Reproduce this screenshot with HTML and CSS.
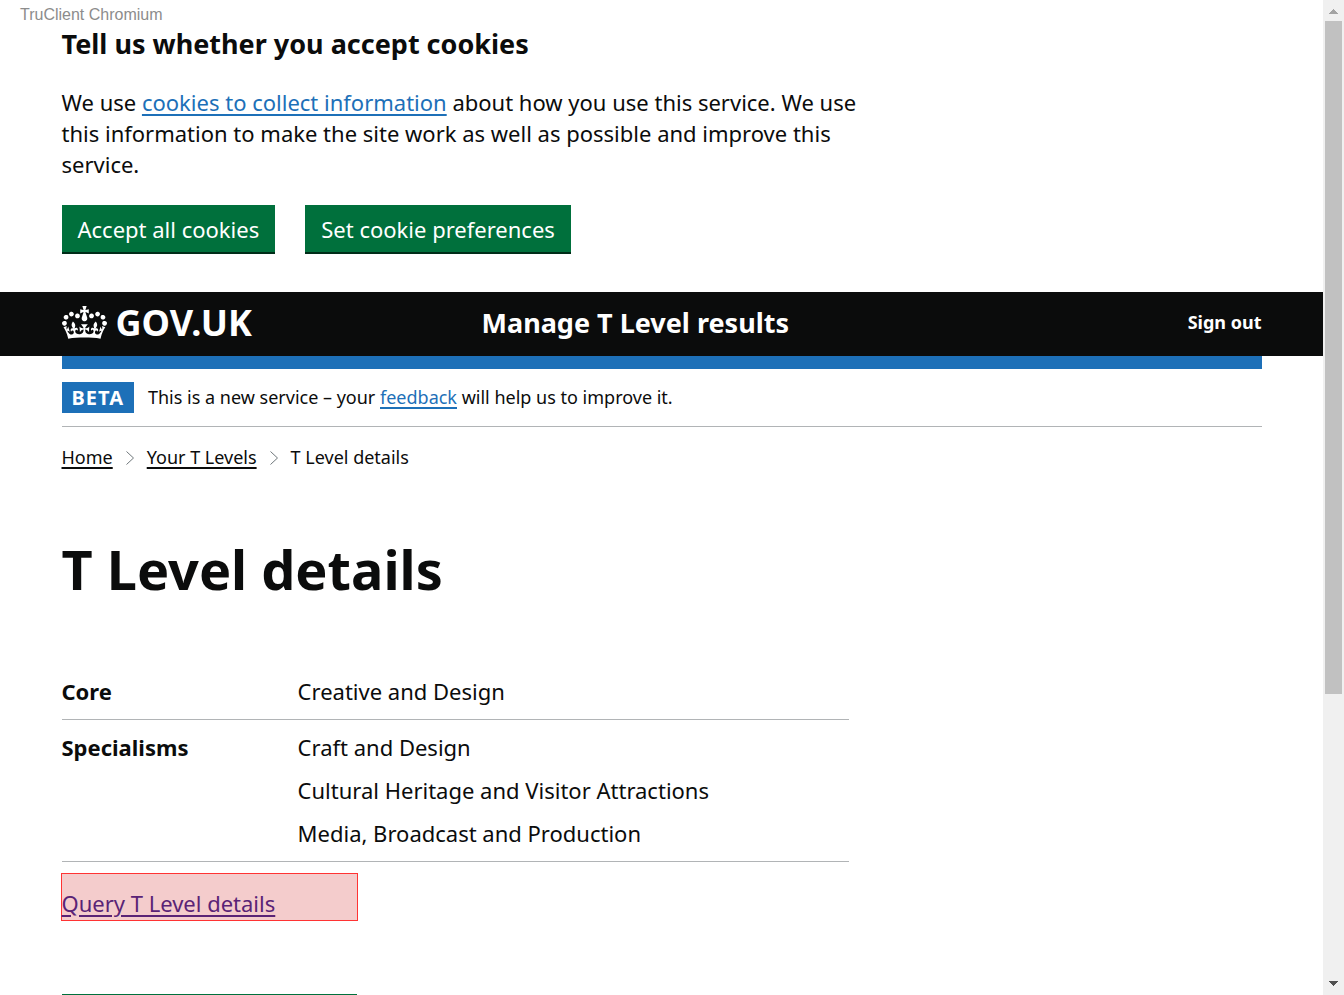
FILE: index.html
```html
<!DOCTYPE html>
<html lang="en">
<head>
<meta charset="utf-8">
<title>T Level details</title>
<link rel="stylesheet" href="styles.css">
</head>
<body>
<div class="page">
  <p class="client-label">TruClient Chromium</p>
  <section class="container cookies" aria-labelledby="cookie-title">
    <h2 class="cookies-title" id="cookie-title">Tell us whether you accept cookies</h2>
    <p class="cookies-text">We use <a class="link" href="#">cookies to collect information</a> about how you use this service. We use this information to make the site work as well as possible and improve this service.</p>
    <div class="cookies-actions">
      <button class="button" type="button">Accept all cookies</button>
      <button class="button" type="button">Set cookie preferences</button>
    </div>
  </section>
  <header class="header">
    <div class="container header-row">
      <a class="logo" href="#">
        <svg class="crown" viewBox="0 0 132 97" aria-hidden="true"><path fill="currentColor" fill-rule="evenodd" d="M25 30.2c3.5 1.5 7.7-.2 9.1-3.7 1.5-3.6-.2-7.8-3.9-9.2-3.6-1.4-7.6.3-9.1 3.9-1.4 3.5.3 7.5 3.9 9zM9 39.5c3.6 1.5 7.8-.2 9.2-3.7 1.5-3.6-.2-7.8-3.9-9.1-3.6-1.5-7.6.2-9.1 3.8-1.4 3.5.3 7.5 3.8 9zM4.4 57.2c3.5 1.5 7.7-.2 9.1-3.8 1.5-3.6-.2-7.7-3.9-9.1-3.5-1.5-7.6.3-9.1 3.8-1.4 3.5.3 7.6 3.9 9.1zm38.3-21.4c3.5 1.5 7.7-.2 9.1-3.8 1.5-3.6-.2-7.7-3.9-9.1-3.6-1.5-7.6.3-9.1 3.8-1.3 3.6.4 7.7 3.9 9.1zm64.4-5.6c-3.6 1.5-7.8-.2-9.1-3.7-1.5-3.6.2-7.8 3.8-9.2 3.6-1.4 7.7.3 9.2 3.9 1.3 3.5-.4 7.5-3.9 9zm15.9 9.3c-3.6 1.5-7.7-.2-9.1-3.7-1.5-3.6.2-7.8 3.7-9.1 3.6-1.5 7.7.2 9.2 3.8 1.5 3.5-.3 7.5-3.8 9zm4.7 17.7c-3.6 1.5-7.8-.2-9.2-3.8-1.5-3.6.2-7.7 3.9-9.1 3.6-1.5 7.7.3 9.2 3.8 1.3 3.5-.4 7.6-3.9 9.1zM89.3 35.8c-3.6 1.5-7.8-.2-9.2-3.8-1.4-3.6.2-7.7 3.9-9.1 3.6-1.5 7.7.3 9.2 3.8 1.4 3.6-.3 7.7-3.9 9.1zM69.7 17.7l8.9 4.7V9.3l-8.9 2.8c-.2-.3-.5-.6-.9-.9L72.4 0H59.6l3.5 11.2c-.3.3-.6.5-.9.9l-8.8-2.8v13.1l8.8-4.7c.3.3.6.7.9.9l-5 15.4v.1c-.2.8-.4 1.6-.4 2.4 0 4.1 3.1 7.5 7 8.1h.2c.3 0 .7.1 1 .1.4 0 .7 0 1-.1h.2c4-.6 7.1-4.1 7.1-8.1 0-.8-.1-1.7-.4-2.4V34l-5.1-15.4c.4-.2.7-.6 1-.9zM66 92.8c16.9 0 32.8 1.1 47.1 3.2 4-16.9 8.9-26.7 14-33.5l-9.6-3.4c1 4.9 1.1 7.2 0 10.2-1.5-1.4-3-4.3-4.2-8.7L108.6 76c2.8-2 5-3.2 7.5-3.3-4.4 9.4-10 11.9-13.6 11.2-4.3-.8-6.3-4.6-5.6-7.9 1-4.7 5.7-5.9 8-.5 4.3-8.7-3-11.4-7.6-8.8 7.1-7.2 7.9-13.5 2.1-21.1-8 6.1-8.1 12.3-4.5 20.8-4.7-5.4-12.1-2.5-9.5 6.2 3.4-5.2 7.9-2 7.2 3.1-.6 4.3-6.4 7.8-13.5 7.2-10.3-.9-10.9-8-11.2-13.8 2.5-.5 7.1 1.8 11 7.3L80.2 60c-4.1 4.4-8 5.3-12.3 5.4 1.4-4.4 8-11.6 8-11.6H55.5s6.4 7.2 7.9 11.6c-4.2-.1-8-1-12.3-5.4l1.4 16.4c3.9-5.5 8.5-7.7 10.9-7.3-.3 5.8-.9 12.8-11.1 13.8-7.2.6-12.9-2.9-13.5-7.2-.7-5 3.8-8.3 7.1-3.1 2.7-8.7-4.6-11.6-9.4-6.2 3.7-8.5 3.6-14.7-4.6-20.8-5.8 7.6-5 13.9 2.2 21.1-4.7-2.6-11.9.1-7.7 8.8 2.3-5.5 7.1-4.2 8.1.5.7 3.3-1.3 7.1-5.7 7.9-3.5.7-9-1.8-13.5-11.2 2.5.1 4.7 1.3 7.5 3.3l-4.7-15.4c-1.2 4.4-2.7 7.2-4.3 8.7-1.1-3-.9-5.3 0-10.2l-9.5 3.4c5 6.9 9.9 16.7 14 33.5 14.8-2.1 30.8-3.2 47.7-3.2z"/></svg>
        <span>GOV.UK</span>
      </a>
      <a class="service-name" href="#">Manage T Level results</a>
      <a class="sign-out" href="#">Sign out</a>
    </div>
  </header>
  <div class="container">
    <div class="header-bar"></div>
    <div class="phase">
      <strong class="tag">BETA</strong>
      <span>This is a new service – your <a class="link" href="#">feedback</a> will help us to improve it.</span>
    </div>
    <nav class="breadcrumbs" aria-label="Breadcrumb">
      <a class="crumb" href="#">Home</a>
      <svg class="chevron" viewBox="0 0 8 14" aria-hidden="true"><path d="M0.5 0.5L7.5 7L0.5 13.5" fill="none" stroke="currentColor"/></svg>
      <a class="crumb" href="#">Your T Levels</a>
      <svg class="chevron" viewBox="0 0 8 14" aria-hidden="true"><path d="M0.5 0.5L7.5 7L0.5 13.5" fill="none" stroke="currentColor"/></svg>
      <span>T Level details</span>
    </nav>
    <main class="main">
      <h1 class="title">T Level details</h1>
      <dl class="summary">
        <div class="summary-row">
          <dt>Core</dt>
          <dd><p>Creative and Design</p></dd>
        </div>
        <div class="summary-row">
          <dt>Specialisms</dt>
          <dd>
            <p>Craft and Design</p>
            <p>Cultural Heritage and Visitor Attractions</p>
            <p>Media, Broadcast and Production</p>
          </dd>
        </div>
      </dl>
      <div class="query"><a class="link visited" href="#">Query T Level details</a></div>
      <div class="next-action"></div>
    </main>
  </div>
</div>
<div class="scrollbar" aria-hidden="true">
  <svg class="arrow arrow-up" viewBox="0 0 9 5"><path d="M4 0h1v1h1v1h1v1h1v1h1v1H0V4h1V3h1V2h1V1h1z" fill="currentColor"/></svg>
  <div class="track"><div class="thumb"></div></div>
  <svg class="arrow" viewBox="0 0 9 5"><path d="M0 0h9v1H8v1H7v1H6v1H5v1H4V4H3V3H2V2H1V1H0z" fill="currentColor"/></svg>
</div>
</body>
</html>
```
FILE: styles.css
```css
* { box-sizing: border-box; }
body {
  margin: 0;
  height: 100vh;
  overflow: hidden;
  display: flex;
  background: #fff;
  color: #0b0c0c;
  font-family: "Noto Sans", "Open Sans", sans-serif;
  font-size: 22px;
  line-height: 31px;
}
h1, h2, p, dl, dd { margin: 0; }
.page { flex: 1; min-width: 0; overflow: hidden; }
.container { max-width: 1200px; margin: 0 auto; }
.client-label {
  padding: 6px 0 0 20px;
  font: 16px/18px "Liberation Sans", Arial, sans-serif;
  color: #8c8c8c;
}
.cookies { padding: 4px 0 38px; }
.cookies-title { font-size: 27px; line-height: 32px; }
.cookies-text { max-width: 800px; margin-top: 27px; }
.cookies-actions { display: flex; gap: 30px; margin-top: 25px; }
.link { color: #1d70b8; text-decoration-thickness: 2px; text-underline-offset: 3px; }
.link.visited { color: #5a2376; }
.button {
  border: 0;
  border-bottom: 2px solid #002d18;
  padding: 9px 16px 7px;
  background: #00703c;
  color: #fff;
  font: inherit;
}
.header { background: #0b0c0c; color: #fff; }
.header-row { display: grid; grid-template-columns: 35% 1fr auto; align-items: center; height: 64px; padding-bottom: 4px; }
.header a { color: inherit; text-decoration: none; font-weight: 700; }
.logo { display: flex; align-items: center; gap: 9px; font-size: 36px; }
.crown { width: 45px; height: 33px; }
.service-name { font-size: 27px; }
.sign-out { font-size: 18px; }
.header-bar { height: 13px; background: #1d70b8; }
.phase {
  display: flex;
  align-items: center;
  gap: 14px;
  padding: 13px 0;
  border-bottom: 1px solid #b1b4b6;
  font-size: 18px;
}
.tag { padding: 0 10px; background: #1d70b8; color: #fff; font-size: 20px; letter-spacing: 1px; }
.breadcrumbs { display: flex; align-items: center; gap: 13px; margin-top: 15px; font-size: 18px; }
.crumb { color: inherit; text-decoration-thickness: 2px; text-underline-offset: 3px; }
.chevron { width: 8px; height: 14px; color: #6f777b; }
.main { max-width: 787px; padding-top: 64px; }
.title { font-size: 54px; line-height: 64px; }
.summary { margin-top: 63px; }
.summary-row {
  display: grid;
  grid-template-columns: 30% 1fr;
  padding: 12px 0;
  border-bottom: 1px solid #b1b4b6;
}
.summary dt { font-weight: 700; }
.summary dd { display: grid; gap: 12px; }
.query {
  width: 297px;
  margin: 11px 0 0 -1px;
  padding: 14px 0 1px;
  border: 1px solid #f33;
  background: #f4cccc;
}
.next-action { width: 295px; height: 50px; margin-top: 73px; background: #00703c; }
.scrollbar {
  width: 21px;
  display: flex;
  flex-direction: column;
  align-items: center;
  padding: 9px 2px;
  background: #f0f0f0;
  color: #505050;
}
.arrow { width: 9px; height: 5px; }
.arrow-up { color: #a3a3a3; }
.track { flex: 1; width: 100%; padding: 7px 0; }
.thumb { height: 70.6%; background: #c1c1c1; }
```
